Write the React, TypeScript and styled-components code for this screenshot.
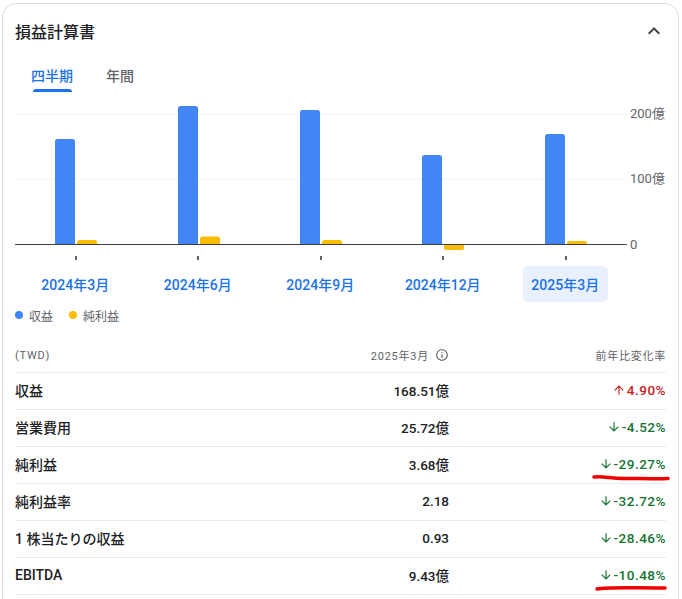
import React from 'react';
import styled, { createGlobalStyle } from 'styled-components';

const GlobalStyle = createGlobalStyle`
  html, body {
    margin: 0;
    padding: 0;
    background: #fff;
    overflow: hidden;
    font-family: Roboto, "Noto Sans CJK JP", sans-serif;
  }
`;

const Card = styled.section`
  position: relative;
  box-sizing: border-box;
  width: 677px;
  margin: 3px 0 0 2px;
  padding: 0 12px 0 12px;
  border: 1px solid #dadce0;
  border-radius: 14px;
  height: 640px;
  background: #fff;
`;

const Header = styled.div`
  display: flex;
  align-items: center;
  justify-content: space-between;
  height: 53px;
`;

const Title = styled.h2`
  margin: 0;
  font-size: 16px;
  font-weight: 500;
  color: #202124;
`;

const Chevron = styled.svg`
  width: 24px;
  height: 24px;
  fill: #3c4043;
`;

const Tabs = styled.div`
  display: flex;
  gap: 33px;
  padding-left: 16px;
  height: 37px;
`;

const Tab = styled.div<{ $active?: boolean }>`
  position: relative;
  font-size: 14px;
  line-height: 20px;
  padding-top: 9px;
  font-weight: 500;
  color: ${(p) => (p.$active ? '#1a73e8' : '#5f6368')};
  &::after {
    content: '';
    display: ${(p) => (p.$active ? 'block' : 'none')};
    position: absolute;
    left: 2px;
    right: 1px;
    top: 32px;
    height: 3px;
    border-radius: 3px 3px 0 0;
    background: #1a73e8;
  }
`;

const ChartSvg = styled.svg`
  display: block;
`;

const AxisText = styled.text`
  font-size: 13px;
  fill: #5f6368;
  font-family: Roboto, "Noto Sans CJK JP", sans-serif;
`;

const Periods = styled.div`
  display: grid;
  grid-template-columns: repeat(5, 122.5px);
  height: 36px;
  margin-left: -1px;
`;

const Period = styled.div<{ $selected?: boolean }>`
  justify-self: center;
  display: flex;
  align-items: center;
  justify-content: center;
  width: 85px;
  height: 36px;
  border-radius: 5px;
  font-size: 14px;
  font-weight: 500;
  white-space: nowrap;
  color: #1a73e8;
  background: ${(p) => (p.$selected ? '#e8f0fe' : 'transparent')};
`;

const Legend = styled.div`
  display: flex;
  align-items: center;
  gap: 16px;
  margin-top: 4px;
  height: 18px;
  font-size: 12px;
  color: #5f6368;
`;

const LegendItem = styled.div`
  display: flex;
  align-items: center;
  gap: 6px;
`;

const Dot = styled.span<{ $color: string }>`
  width: 8px;
  height: 8px;
  border-radius: 50%;
  background: ${(p) => p.$color};
`;

const Table = styled.div`
  margin-top: 14px;
`;

const Row = styled.div<{ $head?: boolean }>`
  position: relative;
  display: grid;
  grid-template-columns: 1fr 220px 217px;
  align-items: center;
  box-sizing: border-box;
  width: 651px;
  height: ${(p) => (p.$head ? '35px' : '37px')};
  padding-bottom: ${(p) => (p.$head ? '0' : '2px')};
  border-bottom: 1px solid #e8eaed;
  font-size: ${(p) => (p.$head ? '11px' : '14px')};
  font-weight: ${(p) => (p.$head ? 400 : 500)};
  letter-spacing: ${(p) => (p.$head ? '0.75px' : '0')};
  color: ${(p) => (p.$head ? '#5f6368' : '#202124')};
`;

const Value = styled.div<{ $head?: boolean }>`
  display: flex;
  align-items: center;
  justify-content: flex-end;
  gap: 6px;
  font-size: ${(p) => (p.$head ? '11px' : '13.5px')};
`;

const Change = styled.div<{ $tone: 'up' | 'down' | 'head' }>`
  display: flex;
  align-items: center;
  justify-content: flex-end;
  gap: 1px;
  font-size: ${(p) => (p.$tone === 'head' ? '11px' : '13.5px')};
  letter-spacing: ${(p) => (p.$tone === 'head' ? '0.75px' : '0.5px')};
  color: ${(p) => (p.$tone === 'up' ? '#c5221f' : p.$tone === 'down' ? '#137333' : '#5f6368')};
`;

const SmallIcon = styled.svg`
  width: 14px;
  height: 14px;
  fill: currentColor;
`;

const Scribble = styled.svg<{ $top: number; $right: number }>`
  position: absolute;
  right: ${(p) => p.$right}px;
  top: ${(p) => p.$top}px;
  overflow: visible;
  pointer-events: none;
`;

const UP = 'M20 12l-1.41 1.41L13 7.83V20h-2V7.83l-5.58 5.58L4 12l8-8 8 8z';
const DOWN = 'M20 12l-1.41-1.41L13 16.17V4h-2v12.17l-5.58-5.59L4 12l8 8 8-8z';

const bars = [
  { x: 55, top: 139, net: 240, center: 76 },
  { x: 178, top: 106, net: 236.5, center: 198 },
  { x: 300, top: 110, net: 240, center: 321 },
  { x: 422, top: 155, net: 250, center: 443 },
  { x: 545, top: 134, net: 241, center: 566 },
];

const periods = ['2024年3月', '2024年6月', '2024年9月', '2024年12月', '2025年3月'];

const rows = [
  { label: '収益', value: '168.51億', change: '4.90%', up: true },
  { label: '営業費用', value: '25.72億', change: '-4.52%' },
  {
    label: '純利益',
    value: '3.68億',
    change: '-29.27%',
    scribble: { d: 'M0 1 C 10 0, 16 2.5, 30 2.5 S 60 3, 74 2.5', width: 76, right: -4 },
  },
  { label: '純利益率', value: '2.18', change: '-32.72%' },
  { label: '1 株当たりの収益', value: '0.93', change: '-28.46%' },
  {
    label: 'EBITDA',
    value: '9.43億',
    change: '-10.48%',
    scribble: { d: 'M0 2 C 10 0, 30 1, 68 1', width: 69, right: 0 },
  },
];

const barPath = (x: number, y0: number, y1: number) => {
  // 上端だけ角丸 (下向きは下端)
  const r = 2.5;
  if (y1 > y0) {
    return `M${x} ${y0} h20 v${y1 - y0 - r} q0 ${r} -${r} ${r} h-15 q-${r} 0 -${r} -${r} z`;
  }
  return `M${x} ${y0} v${y1 - y0 + r} q0 -${r} ${r} -${r} h15 q${r} 0 ${r} ${r} v${y0 - y1 - r} z`;
};

const App: React.FC = () => {
  return (
    <>
      <GlobalStyle />
      <Card>
        <Header>
          <Title>損益計算書</Title>
          <Chevron viewBox="0 0 24 24">
            <path d="M12 8l-6 6 1.41 1.41L12 10.83l4.59 4.58L18 14z" />
          </Chevron>
        </Header>
        <Tabs>
          <Tab $active>四半期</Tab>
          <Tab>年間</Tab>
        </Tabs>
        {/* viewBox はページ座標のまま */}
        <ChartSvg width="665" height="172" viewBox="15 94 665 172">
          <line x1="15" x2="627" y1="114" y2="114" stroke="#f1f3f4" />
          <line x1="15" x2="627" y1="179" y2="179" stroke="#f1f3f4" />
          {bars.map((b) => (
            <g key={b.x}>
              <path d={barPath(b.x, 244, b.top)} fill="#4285f4" />
              <path d={barPath(b.x + 22, b.net > 244 ? 245 : 244, b.net)} fill="#fbbc04" />
              <rect x={b.center - 1} y="256" width="2" height="4" fill="#5f6368" />
            </g>
          ))}
          <line x1="15" x2="627" y1="244.5" y2="244.5" stroke="#3c4043" strokeWidth="1" />
          <AxisText x="630" y="118">200億</AxisText>
          <AxisText x="630" y="183">100億</AxisText>
          <AxisText x="630" y="248.5">0</AxisText>
        </ChartSvg>
        <Periods>
          {periods.map((p, i) => (
            <Period key={p} $selected={i === 4}>
              {p}
            </Period>
          ))}
        </Periods>
        <Legend>
          <LegendItem>
            <Dot $color="#4285f4" />
            収益
          </LegendItem>
          <LegendItem>
            <Dot $color="#fbbc04" />
            純利益
          </LegendItem>
        </Legend>
        <Table>
          <Row $head>
            <div>(TWD)</div>
            <Value $head>
              2025年3月
              <SmallIcon viewBox="0 0 24 24">
                <path d="M11 7h2v2h-2zm0 4h2v6h-2zm1-9C6.48 2 2 6.48 2 12s4.48 10 10 10 10-4.48 10-10S17.52 2 12 2zm0 18c-4.41 0-8-3.59-8-8s3.59-8 8-8 8 3.59 8 8-3.59 8-8 8z" />
              </SmallIcon>
            </Value>
            <Change $tone="head">前年比変化率</Change>
          </Row>
          {rows.map((r) => (
            <Row key={r.label}>
              <div>{r.label}</div>
              <Value>{r.value}</Value>
              <Change $tone={r.up ? 'up' : 'down'}>
                <SmallIcon viewBox="0 0 24 24">
                  <path d={r.up ? UP : DOWN} />
                </SmallIcon>
                {r.change}
              </Change>
              {r.scribble && (
                <Scribble
                  $top={29}
                  $right={r.scribble.right}
                  width={r.scribble.width}
                  height="5"
                  viewBox={`0 0 ${r.scribble.width} 5`}
                >
                  <path d={r.scribble.d} fill="none" stroke="#f00000" strokeWidth="3.5" strokeLinecap="round" />
                </Scribble>
              )}
            </Row>
          ))}
        </Table>
      </Card>
    </>
  );
};

export default App;
